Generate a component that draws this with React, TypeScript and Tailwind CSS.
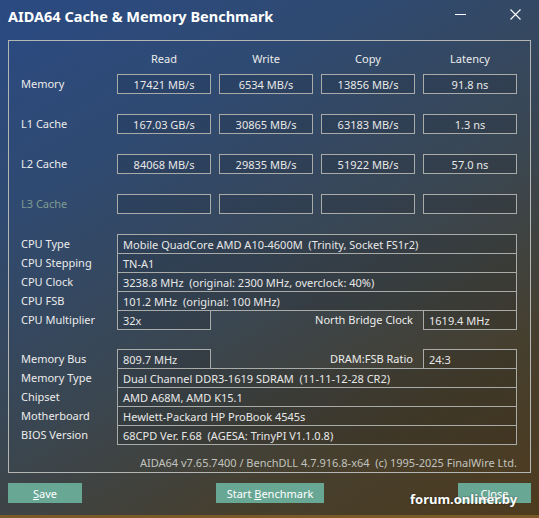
import React from "react"

const font = "font-['Segoe_UI','Noto_Sans',sans-serif]"

function Box({ children, className = "" }: { children?: React.ReactNode; className?: string }) {
  return (
    <div className={`h-[20px] border border-[#a9aba8] bg-black/10 flex items-center justify-center text-[11px] text-[#e8e8e8] leading-none ${className}`}>
      {children}
    </div>
  )
}

function Cell({ children, className = "" }: { children?: React.ReactNode; className?: string }) {
  return (
    <div className={`h-[20px] border border-[#a9aba8] bg-black/10 flex items-center px-[5px] text-[11px] text-[#e8e8e8] leading-none whitespace-pre ${className}`}>
      {children}
    </div>
  )
}

function InfoRow({ label, value }: { label: string; value: string }) {
  return (
    <div className="flex items-center -mt-px first:mt-0">
      <div className="w-[108px] pl-[12px] text-[11px] text-[#ececec]">{label}</div>
      <Cell className="w-[400px]">{value}</Cell>
    </div>
  )
}

function SplitRow({ label, value, label2, value2 }: { label: string; value: string; label2: string; value2: string }) {
  return (
    <div className="flex items-center -mt-px first:mt-0">
      <div className="w-[108px] pl-[12px] text-[11px] text-[#ececec]">{label}</div>
      <Cell className="w-[94px]">{value}</Cell>
      <div className="w-[212px] pr-[10px] text-right text-[11px] text-[#ececec]">{label2}</div>
      <Cell className="w-[94px]">{value2}</Cell>
    </div>
  )
}

const bench = [
  { label: "Memory", vals: ["17421 MB/s", "6534 MB/s", "13856 MB/s", "91.8 ns"] },
  { label: "L1 Cache", vals: ["167.03 GB/s", "30865 MB/s", "63183 MB/s", "1.3 ns"] },
  { label: "L2 Cache", vals: ["84068 MB/s", "29835 MB/s", "51922 MB/s", "57.0 ns"] },
  { label: "L3 Cache", vals: ["", "", "", ""], dim: true },
]

export default function App() {
  return (
    <div className={`relative w-[539px] h-[518px] overflow-hidden ${font} bg-[linear-gradient(150deg,#2a4a82_0%,#2f4a72_25%,#3a4650_55%,#463f2e_78%,#4e3b1e_100%)] flex flex-col`}>
      {/* title bar */}
      <div className="h-[40px] flex items-start pt-[6px] pl-[8px] relative">
        <div className="text-[14.5px] font-bold text-white">AIDA64 Cache &amp; Memory Benchmark</div>
        <div className="absolute left-[455px] top-[14px] w-[11px] h-px bg-white" />
        <svg className="absolute left-[510px] top-[9px]" width="11" height="11" viewBox="0 0 11 11">
          <path d="M0.5 0.5 L10.5 10.5 M10.5 0.5 L0.5 10.5" stroke="white" strokeWidth="1.1" />
        </svg>
      </div>

      {/* main frame */}
      <div className="mx-[8px] w-[523px] h-[433px] border border-[#b4b6b4] flex flex-col">
        <div className="flex pt-[10px] h-[33px]">
          <div className="w-[108px]" />
          <div className="flex gap-[8px]">
            {["Read", "Write", "Copy", "Latency"].map((h) => (
              <div key={h} className="w-[94px] text-center text-[11px] text-[#ececec]">{h}</div>
            ))}
          </div>
        </div>

        <div className="flex flex-col gap-[20px]">
          {bench.map((r) => (
            <div key={r.label} className="flex items-center">
              <div className={`w-[108px] pl-[12px] text-[11px] ${r.dim ? "text-[#7f9b92]" : "text-[#ececec]"}`}>{r.label}</div>
              <div className="flex gap-[8px]">
                {r.vals.map((v, i) => (
                  <Box key={i} className="w-[94px]">{v}</Box>
                ))}
              </div>
            </div>
          ))}
        </div>

        <div className="mt-[20px] flex flex-col">
          <InfoRow label="CPU Type" value="Mobile QuadCore AMD A10-4600M  (Trinity, Socket FS1r2)" />
          <InfoRow label="CPU Stepping" value="TN-A1" />
          <InfoRow label="CPU Clock" value="3238.8 MHz  (original: 2300 MHz, overclock: 40%)" />
          <InfoRow label="CPU FSB" value="101.2 MHz  (original: 100 MHz)" />
          <SplitRow label="CPU Multiplier" value="32x" label2="North Bridge Clock" value2="1619.4 MHz" />
        </div>

        <div className="mt-[19px] flex flex-col">
          <SplitRow label="Memory Bus" value="809.7 MHz" label2="DRAM:FSB Ratio" value2="24:3" />
          <InfoRow label="Memory Type" value="Dual Channel DDR3-1619 SDRAM  (11-11-12-28 CR2)" />
          <InfoRow label="Chipset" value="AMD A68M, AMD K15.1" />
          <InfoRow label="Motherboard" value="Hewlett-Packard HP ProBook 4545s" />
          <InfoRow label="BIOS Version" value="68CPD Ver. F.68  (AGESA: TrinyPI V1.1.0.8)" />
        </div>

        <div className="mt-[10px] pr-[13px] text-right text-[11px] text-[#c2c3bf] whitespace-pre">
          AIDA64 v7.65.7400 / BenchDLL 4.7.916.8-x64  (c) 1995-2025 FinalWire Ltd.
        </div>
      </div>

      {/* buttons */}
      <div className="flex items-center mt-[10px] px-[8px] h-[20px]">
        <button className="w-[74px] h-[20px] bg-[#69a795] text-white text-[11px] leading-none">
          <span className="underline">S</span>ave
        </button>
        <button className="ml-[134px] w-[108px] h-[20px] bg-[#69a795] text-white text-[11px] leading-none">
          Start <span className="underline">B</span>enchmark
        </button>
        <button className="ml-auto w-[73px] h-[20px] bg-[#69a795] text-white text-[11px] leading-none">
          <span className="underline">C</span>lose
        </button>
      </div>

      <div className="absolute left-[410px] top-[490px] text-[13px] font-bold text-white [text-shadow:0_0_2px_rgba(0,0,0,0.6)]">
        forum.onliner.by
      </div>

      <div className="absolute left-0 right-0 bottom-0 h-[3px] bg-[#7a5a28]" />
    </div>
  )
}
